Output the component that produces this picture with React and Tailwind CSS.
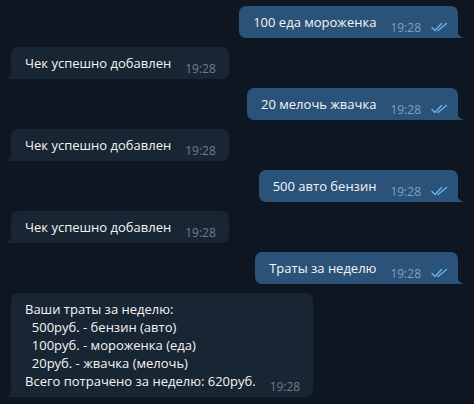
import React from "react";

const messages = [
  { out: true, text: "100 еда мороженка" },
  { out: false, text: "Чек успешно добавлен" },
  { out: true, text: "20 мелочь жвачка" },
  { out: false, text: "Чек успешно добавлен" },
  { out: true, text: "500 авто бензин" },
  { out: false, text: "Чек успешно добавлен" },
  { out: true, text: "Траты за неделю" },
  {
    out: false,
    text:
      "Ваши траты за неделю:\n  500руб. - бензин (авто)\n  100руб. - мороженка (еда)\n  20руб. - жвачка (мелочь)\nВсего потрачено за неделю: 620руб.",
  },
];

const Checks = () => (
  <svg width="18" height="10" viewBox="0 0 18 10" fill="none" className="ml-[10px] mb-[-1px]">
    <path d="M1 5.5 L4 8.5 L10.5 1.5" stroke="#64b5ef" strokeWidth="1.4" strokeLinecap="round" strokeLinejoin="round" />
    <path d="M7 8.5 L15.5 1.5" stroke="#64b5ef" strokeWidth="1.4" strokeLinecap="round" />
  </svg>
);

const Bubble = ({ out, text }) => (
  <div className={out ? "flex justify-end pr-[16px]" : "flex justify-start pl-[11px]"}>
    <div
      className={
        "relative flex items-end rounded-[7px] py-[7px] " +
        (out ? "bg-[#2b5278] rounded-br-none pl-[14px] pr-[9px]" : "bg-[#182533] rounded-bl-none pl-[14px] pr-[13px]")
      }
    >
      <div className="whitespace-pre-wrap text-[13px] leading-[18px] text-[#f5f5f5]">{text}</div>
      <span
        className={
          "ml-[14px] text-[12px] leading-[14px] mb-[-4px] " + (out ? "text-[#7ca3c7]" : "text-[#6d7f8f]")
        }
      >
        19:28
      </span>
      {out && <Checks />}
      {out ? (
        <svg width="7" height="9" viewBox="0 0 7 9" className="absolute right-[-6px] bottom-0">
          <path d="M0 0 Q0.5 8 7 9 L0 9 Z" fill="#2b5278" />
        </svg>
      ) : (
        <svg width="7" height="9" viewBox="0 0 7 9" className="absolute left-[-6px] bottom-0">
          <path d="M7 0 Q6.5 8 0 9 L7 9 Z" fill="#182533" />
        </svg>
      )}
    </div>
  </div>
);

export default function App() {
  return (
    <div
      className="w-[474px] h-[404px] bg-[#0e1621] flex flex-col gap-[9px] pt-[6px] overflow-hidden"
      style={{ fontFamily: '"Open Sans", "Noto Sans", sans-serif' }}
    >
      {messages.map((m, i) => (
        <Bubble key={i} out={m.out} text={m.text} />
      ))}
    </div>
  );
}
